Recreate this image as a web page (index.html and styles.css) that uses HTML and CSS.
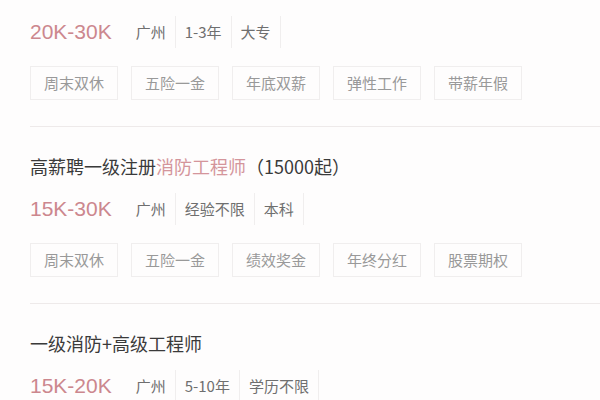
FILE: index.html
```html
<!DOCTYPE html>
<html lang="zh-CN">
<head>
    <meta charset="UTF-8">
    <meta name="viewport" content="width=device-width, initial-scale=1.0">
    <title>职位列表</title>
    <link rel="stylesheet" href="styles.css">
</head>
<body>
<div class="jobs">
    <div class="job">
        <div class="job-title">注册消防工程师</div>
        <div class="job-info">
            <span class="salary">20K-30K</span>
            <span class="meta">广州</span>
            <span class="meta">1-3年</span>
            <span class="meta">大专</span>
        </div>
        <div class="tags">
            <span class="tag">周末双休</span>
            <span class="tag">五险一金</span>
            <span class="tag">年底双薪</span>
            <span class="tag">弹性工作</span>
            <span class="tag">带薪年假</span>
        </div>
    </div>

    <div class="job">
        <div class="job-title">高薪聘一级注册<span class="hl">消防工程师</span>（15000起）</div>
        <div class="job-info">
            <span class="salary">15K-30K</span>
            <span class="meta">广州</span>
            <span class="meta">经验不限</span>
            <span class="meta">本科</span>
        </div>
        <div class="tags">
            <span class="tag">周末双休</span>
            <span class="tag">五险一金</span>
            <span class="tag">绩效奖金</span>
            <span class="tag">年终分红</span>
            <span class="tag">股票期权</span>
        </div>
    </div>

    <div class="job">
        <div class="job-title">一级消防+高级工程师</div>
        <div class="job-info">
            <span class="salary">15K-20K</span>
            <span class="meta">广州</span>
            <span class="meta">5-10年</span>
            <span class="meta">学历不限</span>
        </div>
    </div>
</div>
</body>
</html>
```

FILE: styles.css
```css
body {
    margin: 0;
    background-color: #fefdfd;
    font-family: "Noto Sans CJK SC", "Liberation Sans", sans-serif;
    color: #444;
}

.jobs {
    margin-top: -50px;
    padding-left: 30px;
}

.job {
    padding: 27px 0 26px;
    border-bottom: 1px solid #eeeaea;
}

.job-title {
    font-size: 18px;
    line-height: 24px;
    color: #3a3a3a;
    margin-bottom: 14px;
}

.hl {
    color: #d4959b;
}

.job-info {
    display: flex;
    align-items: center;
    height: 34px;
    margin-bottom: 17px;
}

.salary {
    font-family: "Liberation Sans", sans-serif;
    font-size: 21px;
    color: #cc878e;
    margin-right: 15px;
}

.meta {
    font-size: 15px;
    line-height: 32px;
    color: #6f6f6f;
    padding: 0 9px;
    border-right: 1px solid #f0eeee;
}

.tags {
    display: flex;
    gap: 13px;
}

.tag {
    font-size: 15px;
    line-height: 32px;
    padding: 0 13px;
    color: #999;
    border: 1px solid #f0eeee;
}
```
